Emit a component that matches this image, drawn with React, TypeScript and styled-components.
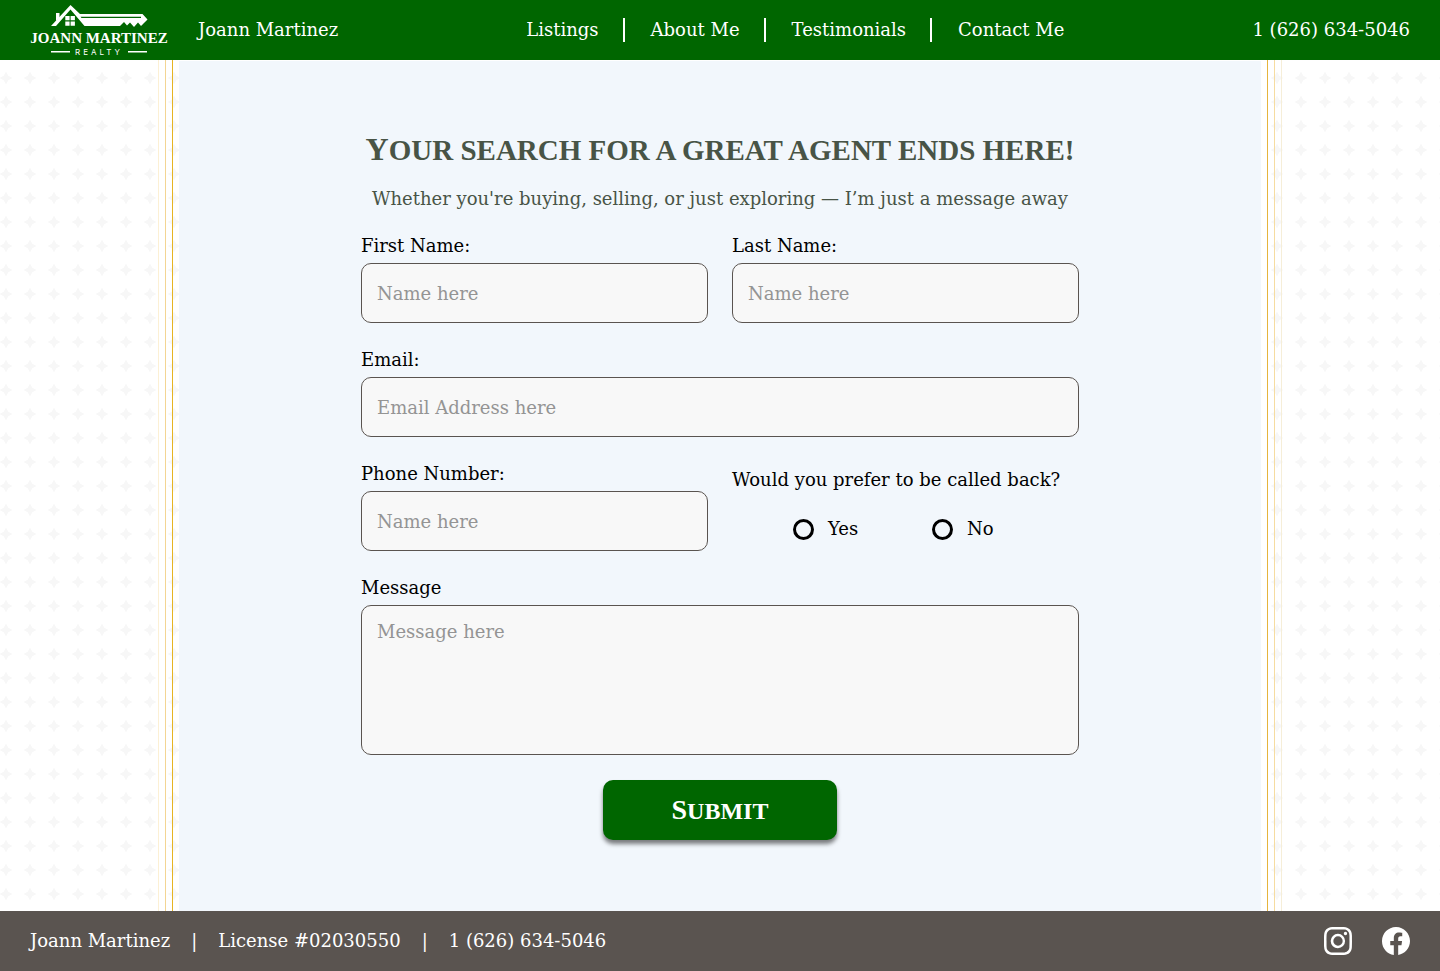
import React from "react";
import styled, { createGlobalStyle } from "styled-components";
import { BsFacebook, BsInstagram } from "react-icons/bs";

const GlobalStyle = createGlobalStyle`
  *, *::before, *::after { box-sizing: border-box; }
  body {
    margin: 0;
    background: #fff;
    color: #000;
    font: 300 18px/24px "DejaVu Serif", serif;
  }
  input, textarea, button { font: inherit; }
`;

const Page = styled.div`
  min-height: 100vh;
  display: flex;
  flex-direction: column;
`;

const Header = styled.header`
  height: 60px;
  padding: 0 30px;
  display: flex;
  align-items: center;
  justify-content: space-between;
  background: #006600;
  color: #fff;
`;

const Brand = styled.div`
  display: flex;
  align-items: center;
  gap: 28px;
`;

const TextLink = styled.a`
  color: inherit;
  text-decoration: none;
  white-space: nowrap;
`;

const Nav = styled.nav`
  display: flex;
  align-items: center;
`;

const NavLink = styled(TextLink)`
  padding: 0 26px;
  & + & { box-shadow: -2px 0 0 #fff; }
`;

const Body = styled.div`
  flex: 1;
  display: flex;
`;

const Side = styled.div<{ $side: "left" | "right" }>`
  position: relative;
  flex: 0 0 179px;
  display: flex;
  gap: 6px;
  justify-content: ${(p) => (p.$side === "left" ? "flex-end" : "flex-start")};
  padding: 0 6px;
  overflow: hidden;
`;

const Stars = styled.svg`
  position: absolute;
  inset: 0;
  width: 100%;
  height: 100%;
`;

const Line = styled.div<{ $color: string }>`
  position: relative;
  width: 1px;
  background: ${(p) => p.$color};
`;

const Panel = styled.main`
  flex: 1;
  min-width: 0;
  padding: 68px 24px;
  margin-top: 1px;
  background: #f2f7fc;
  display: flex;
  flex-direction: column;
  align-items: center;
`;

const Title = styled.h1`
  margin: 0;
  color: #485446;
  font: bold 29px/40px "Liberation Serif", serif;
  text-transform: uppercase;
  text-align: center;
  &::first-letter { font-size: 32px; line-height: 40px; }
`;

const Lead = styled.p`
  margin: 17px 0 23px;
  color: #485446;
  text-align: center;
`;

const Form = styled.form`
  width: 100%;
  max-width: 718px;
  display: grid;
  grid-template-columns: 1fr 1fr;
  gap: 25px 24px;
`;

const Field = styled.div<{ $wide?: boolean }>`
  grid-column: ${(p) => (p.$wide ? "1 / -1" : "auto")};
  display: flex;
  flex-direction: column;
  gap: 5px;
`;

const Input = styled.input`
  width: 100%;
  height: 60px;
  padding: 0 15px;
  border: 1px solid #5a5450;
  border-radius: 10px;
  background: #f8f8f8;
  &::placeholder { color: #949494; opacity: 1; }
`;

const TextArea = styled.textarea`
  display: block;
  width: 100%;
  height: 150px;
  padding: 14px 15px;
  border: 1px solid #5a5450;
  border-radius: 10px;
  background: #f8f8f8;
  resize: none;
  &::placeholder { color: #949494; opacity: 1; }
`;

const Callback = styled.fieldset`
  margin: 0;
  padding: 6px 0 0;
  border: 0;
  min-width: 0;
`;

const Legend = styled.legend`
  float: left;
  width: 100%;
  padding: 0;
  white-space: nowrap;
`;

const Options = styled.div`
  clear: both;
  padding: 25px 24px 0 61px;
  display: grid;
  grid-template-columns: 139px 1fr;
`;

const Option = styled.label`
  display: flex;
  align-items: center;
  gap: 14px;
`;

const Radio = styled.input`
  appearance: none;
  width: 21px;
  height: 21px;
  margin: 0;
  border: 3px solid #000;
  border-radius: 50%;
  &:checked { background: radial-gradient(#000 0 4px, transparent 5px); }
`;

const Submit = styled.button`
  grid-column: 1 / -1;
  justify-self: center;
  width: 234px;
  height: 60px;
  border: 0;
  border-radius: 10px;
  background: #006600;
  color: #fff;
  font: bold 24px/32px "Liberation Serif", serif;
  text-transform: uppercase;
  box-shadow: 0 4px 4px rgba(0, 0, 0, 0.5);
`;

const SubmitText = styled.span`
  display: inline-block;
  &::first-letter { font-size: 28px; }
`;

const Footer = styled.footer`
  height: 60px;
  padding: 0 30px;
  display: flex;
  align-items: center;
  justify-content: space-between;
  background: #5a5450;
  color: #fff;
`;

const FooterInfo = styled.div`
  display: flex;
  gap: 21px;
  white-space: nowrap;
`;

const Social = styled.div`
  display: flex;
  gap: 30px;
`;

const SocialLink = styled.a`
  display: flex;
  color: #fff;
`;

function Logo() {
  return (
    <svg width="140" height="60" viewBox="0 0 140 60" role="img" aria-label="Joann Martinez Realty" fill="#fff">
      <path d="M21 26 40.500 5 50 14h62.500l5 5.500-3.500 3.500-3 3-3-3.500-4 4.500-4-4.500-3 3-3-3.500-4 4H54.500L40.500 9.500 26 26z" />
      <path d="M26 13h3.500v5L26 21z" />
      <path d="M50.500 16.700H111V18H51.500z" fill="#006600" />
      <path d="M35.300 16h4.300v4.300h-4.300zM40.600 16h4.300v4.300h-4.300zM35.300 21.400h4.300v4.300h-4.300zM40.600 21.400h4.300v4.300h-4.300z" />
      <text x="69" y="43" textAnchor="middle" fontFamily="Liberation Serif, serif" fontWeight="700" fontSize="15">JOANN MARTINEZ</text>
      <path d="M21 51h19v1.500H21zM98 51h19v1.500H98z" />
      <text x="45" y="55" fontFamily="Inter, sans-serif" fontWeight="400" fontSize="8" letterSpacing="3">REALTY</text>
    </svg>
  );
}

function StarField({ id, x }: { id: string; x: number }) {
  return (
    <Stars aria-hidden="true">
      <defs>
        <pattern id={id} x={x} y="6" width="24" height="24" patternUnits="userSpaceOnUse">
          <path d="M12 5.500 14.300 9.700 18.500 12 14.300 14.300 12 18.500 9.700 14.300 5.500 12 9.700 9.700Z" fill="#f7f7f7" />
        </pattern>
      </defs>
      <rect width="100%" height="100%" fill={`url(#${id})`} />
    </Stars>
  );
}

export default function App() {
  return (
    <>
      <GlobalStyle />
      <Page>
        <Header>
          <Brand>
            <Logo />
            <span>Joann Martinez</span>
          </Brand>
          <Nav>
            <NavLink href="#listings">Listings</NavLink>
            <NavLink href="#about">About Me</NavLink>
            <NavLink href="#testimonials">Testimonials</NavLink>
            <NavLink href="#contact">Contact Me</NavLink>
          </Nav>
          <TextLink href="tel:16266345046">1 (626) 634-5046</TextLink>
        </Header>
        <Body>
          <Side $side="left">
            <StarField id="stars-left" x={-6} />
            <Line $color="#fcf0d4" />
            <Line $color="#f3d593" />
            <Line $color="#e6b422" />
          </Side>
          <Panel>
            <Title>Your search for a great agent ends here!</Title>
            <Lead>Whether you're buying, selling, or just exploring — I’m just a message away</Lead>
            <Form onSubmit={(e) => e.preventDefault()}>
              <Field>
                <label htmlFor="first">First Name:</label>
                <Input id="first" placeholder="Name here" />
              </Field>
              <Field>
                <label htmlFor="last">Last Name:</label>
                <Input id="last" placeholder="Name here" />
              </Field>
              <Field $wide>
                <label htmlFor="email">Email:</label>
                <Input id="email" type="email" placeholder="Email Address here" />
              </Field>
              <Field>
                <label htmlFor="phone">Phone Number:</label>
                <Input id="phone" type="tel" placeholder="Name here" />
              </Field>
              <Callback>
                <Legend>Would you prefer to be called back?</Legend>
                <Options>
                  <Option><Radio type="radio" name="callback" value="yes" />Yes</Option>
                  <Option><Radio type="radio" name="callback" value="no" />No</Option>
                </Options>
              </Callback>
              <Field $wide>
                <label htmlFor="message">Message</label>
                <TextArea id="message" placeholder="Message here" />
              </Field>
              <Submit type="submit"><SubmitText>Submit</SubmitText></Submit>
            </Form>
          </Panel>
          <Side $side="right">
            <StarField id="stars-right" x={4} />
            <Line $color="#e6b43c" />
            <Line $color="#f6dca0" />
            <Line $color="#f6eed8" />
          </Side>
        </Body>
        <Footer>
          <FooterInfo>
            <span>Joann Martinez</span>
            <span>|</span>
            <span>License #02030550</span>
            <span>|</span>
            <TextLink href="tel:16266345046">1 (626) 634-5046</TextLink>
          </FooterInfo>
          <Social>
            <SocialLink href="#instagram" aria-label="Instagram"><BsInstagram size={28} /></SocialLink>
            <SocialLink href="#facebook" aria-label="Facebook"><BsFacebook size={28} /></SocialLink>
          </Social>
        </Footer>
      </Page>
    </>
  );
}
